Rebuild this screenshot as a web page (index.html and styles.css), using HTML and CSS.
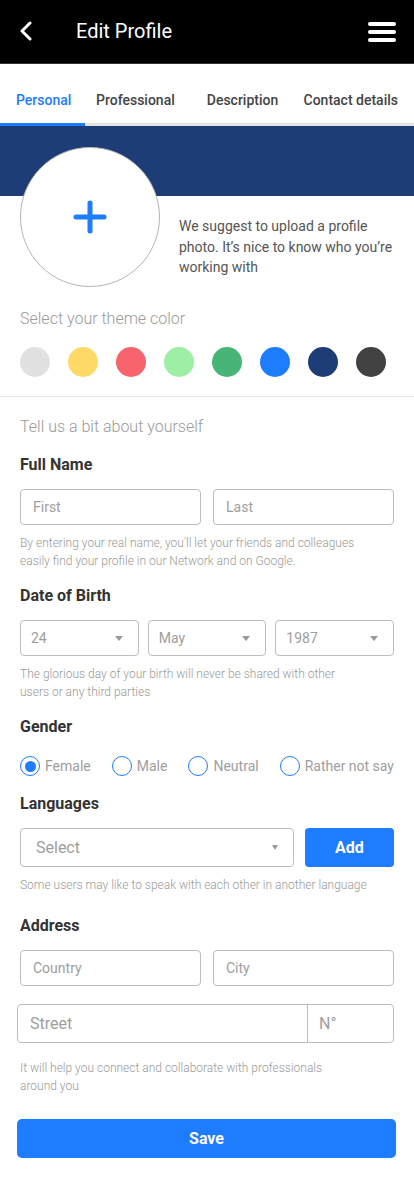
FILE: index.html
```html
<!DOCTYPE html>
<html lang="en">
<head>
<meta charset="utf-8">
<title>Edit Profile</title>
<link rel="stylesheet" href="styles.css">
</head>
<body>
<header class="topbar">
  <svg class="back" width="14" height="20" viewBox="0 0 14 20"><path d="M11 2 L3 10 L11 18" fill="none" stroke="#fff" stroke-width="3" stroke-linecap="round" stroke-linejoin="round"/></svg>
  <h1 class="title">Edit Profile</h1>
  <svg class="menu" width="30" height="24" viewBox="0 0 30 24"><g stroke="#fff" stroke-width="4" stroke-linecap="round"><line x1="3" y1="4" x2="27" y2="4"/><line x1="3" y1="12" x2="27" y2="12"/><line x1="3" y1="20" x2="27" y2="20"/></g></svg>
</header>
<nav class="tabs">
  <a class="tab active">Personal</a>
  <a class="tab t2">Professional</a>
  <a class="tab t3">Description</a>
  <a class="tab t4">Contact details</a>
</nav>
<section class="profile">
  <div class="avatar">
    <svg width="34" height="34" viewBox="0 0 34 34"><g stroke="#1e7cff" stroke-width="5" stroke-linecap="round"><line x1="17" y1="3" x2="17" y2="31"/><line x1="3" y1="17" x2="31" y2="17"/></g></svg>
  </div>
  <p class="suggest">We suggest to upload a profile photo. It’s nice to know who you’re working with</p>
</section>
<section class="theme">
  <p class="muted">Select your theme color</p>
  <div class="swatches">
    <span class="sw sw-grey"></span>
    <span class="sw sw-yellow"></span>
    <span class="sw sw-red"></span>
    <span class="sw sw-mint"></span>
    <span class="sw sw-green"></span>
    <span class="sw sw-blue"></span>
    <span class="sw sw-navy"></span>
    <span class="sw sw-dark"></span>
  </div>
</section>
<main class="form">
  <p class="muted intro">Tell us a bit about yourself</p>

  <h2 class="label">Full Name</h2>
  <div class="row two">
    <div class="field">First</div>
    <div class="field">Last</div>
  </div>
  <p class="help">By entering your real name, you'll let your friends and colleagues<br>easily find your profile in our Network and on Google.</p>

  <h2 class="label">Date of Birth</h2>
  <div class="row three">
    <div class="field select">24<span class="caret"></span></div>
    <div class="field select">May<span class="caret"></span></div>
    <div class="field select">1987<span class="caret"></span></div>
  </div>
  <p class="help">The glorious day of your birth will never be shared with other<br>users or any third parties</p>

  <h2 class="label">Gender</h2>
  <div class="radios">
    <label class="radio"><span class="dot on"></span>Female</label>
    <label class="radio"><span class="dot"></span>Male</label>
    <label class="radio"><span class="dot"></span>Neutral</label>
    <label class="radio"><span class="dot"></span>Rather not say</label>
  </div>

  <h2 class="label lang">Languages</h2>
  <div class="row lang-row">
    <div class="field big select grow">Select<span class="caret small"></span></div>
    <button class="btn add">Add</button>
  </div>
  <p class="help">Some users may like to speak with each other in another language</p>

  <h2 class="label addr">Address</h2>
  <div class="row two">
    <div class="field">Country</div>
    <div class="field">City</div>
  </div>
  <div class="street">
    <div class="seg grow">Street</div>
    <div class="seg num">N°</div>
  </div>
  <p class="help help-addr">It will help you connect and collaborate with professionals<br>around you</p>

  <button class="btn save">Save</button>
</main>
</body>
</html>
```
FILE: styles.css
```css
* { box-sizing: border-box; }
html, body { margin: 0; padding: 0; background: #fff; }
body { font-family: Roboto, "Liberation Sans", sans-serif; color: #333; width: 414px; }
p, h1, h2 { margin: 0; }

.topbar {
  height: 64px;
  background: #000;
  border-bottom: 1px solid #333;
  display: flex;
  align-items: center;
  padding: 0 20px 0 19px;
}
.back { display: block; margin-top: -1px; }
.title {
  color: #fff;
  font-size: 20px;
  font-weight: 400;
  margin-left: 43px;
  flex: 1;
  margin-top: -1px;
}
.menu { display: block; margin-top: 1px; margin-right: -3px; }

.tabs {
  display: flex;
  border-bottom: 3px solid #e4e4e4;
}
.tab {
  font-size: 14px;
  font-weight: 500;
  color: #444;
  line-height: 20px;
  padding: 26px 0 13px;
  margin-bottom: -3px;
  border-bottom: 3px solid transparent;
  white-space: nowrap;
}
.tab.active { color: #1e7cff; border-bottom-color: #1e7cff; padding-left: 16px; width: 85px; }
.tab.t2 { margin-left: 11px; }
.tab.t3 { margin-left: 32px; }
.tab.t4 { margin-left: auto; margin-right: 16px; }

.profile {
  background: linear-gradient(#1e3c75 0, #1e3c75 70px, #fff 70px);
  padding: 21px 20px 0;
  display: flex;
  align-items: flex-start;
}
.avatar {
  width: 140px;
  height: 140px;
  border-radius: 50%;
  background: #fff;
  border: 1px solid #b5b5b5;
  display: flex;
  align-items: center;
  justify-content: center;
  flex: none;
}
.avatar svg { display: block; margin-top: -1px; margin-left: -1px; }
.suggest {
  margin-left: 19px;
  margin-top: 69px;
  font-size: 14px;
  line-height: 20.5px;
  color: #555;
}

.theme {
  padding: 22px 20px 19px;
  border-bottom: 1px solid #e5e5e5;
}
.muted {
  font-size: 16px;
  font-weight: 300;
  color: #9a9a9a;
  line-height: 20px;
}
.swatches {
  display: flex;
  justify-content: space-between;
  margin-top: 18px;
  padding-right: 8px;
}
.sw { width: 30px; height: 30px; border-radius: 50%; display: block; }
.sw-grey { background: #e1e1e1; }
.sw-yellow { background: #ffd966; }
.sw-red { background: #f8646d; }
.sw-mint { background: #9defa6; }
.sw-green { background: #46b575; }
.sw-blue { background: #1e7cff; }
.sw-navy { background: #1e3c75; }
.sw-dark { background: #424242; }

.form { padding: 20px 20px 20px; }
.label {
  font-size: 16px;
  font-weight: 700;
  color: #333;
  line-height: 20px;
  margin-top: 16px;
}
.intro + .label { margin-top: 18px; }
.row { display: flex; margin-top: 14px; }
.row.two { gap: 12px; }
.row.two .field { flex: 1; }
.row.three { gap: 9px; }
.row.three .field { flex: 1; }
.field {
  height: 36px;
  border: 1px solid #bdbdbd;
  border-radius: 4px;
  font-size: 14px;
  color: #9e9e9e;
  display: flex;
  align-items: center;
  padding: 0 12px;
  position: relative;
}
.field.select { padding-left: 10px; justify-content: space-between; padding-right: 15px; }
.caret {
  width: 0; height: 0;
  border-left: 4px solid transparent;
  border-right: 4px solid transparent;
  border-top: 5px solid #999;
}
.caret.small { border-left-width: 3.5px; border-right-width: 3.5px; border-top-width: 5px; }
.field.big { height: 39px; font-size: 16px; padding-left: 15px; padding-right: 15px; }
.grow { flex: 1; }

.help {
  margin-top: 9px;
  font-size: 12px;
  line-height: 18px;
  font-weight: 300;
  color: #9a9a9a;
}

.radios {
  display: flex;
  justify-content: space-between;
  margin-top: 19px;
  height: 20px;
  align-items: center;
}
.radio {
  display: flex;
  align-items: center;
  font-size: 14px;
  color: #9e9e9e;
}
.dot {
  width: 20px; height: 20px;
  border-radius: 50%;
  border: 1.5px solid #1e7cff;
  margin-right: 5px;
  display: flex;
  align-items: center;
  justify-content: center;
}
.dot.on::after {
  content: "";
  width: 11px; height: 11px;
  border-radius: 50%;
  background: #1e7cff;
}
.label.lang { margin-top: 18px; }
.lang-row { gap: 11px; }
.btn {
  border: 0;
  background: #1e7cff;
  color: #fff;
  font-family: Roboto, "Liberation Sans", sans-serif;
  font-weight: 700;
  font-size: 16px;
  border-radius: 4px;
  height: 39px;
}
.btn.add { width: 89px; }
.label.addr { margin-top: 22px; }

.street {
  display: flex;
  margin: 18px 0 0 -3px;
  height: 39px;
  border: 1px solid #bdbdbd;
  border-radius: 4px;
}
.seg {
  display: flex;
  align-items: center;
  font-size: 16px;
  color: #9e9e9e;
  padding-left: 12px;
}
.seg.num { width: 86px; border-left: 1px solid #bdbdbd; padding-left: 11px; }
.help-addr { margin-top: 16px; }
.save {
  display: block;
  width: 379px;
  margin: 24px 0 0 -3px;
  border-radius: 5px;
}
```
